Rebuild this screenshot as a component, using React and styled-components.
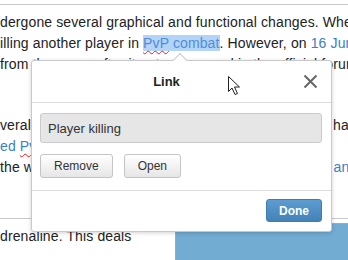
import styled, { createGlobalStyle } from "styled-components";

const GlobalStyle = createGlobalStyle`
  html, body {
    margin: 0;
    padding: 0;
    background: #fff;
  }
  body {
    font-family: "Liberation Sans", Arial, sans-serif;
  }
`;

const Page = styled.div`
  position: relative;
  width: 348px;
  height: 260px;
  overflow: hidden;
  background: #fff;
  color: #222;
  font-size: 14px;
  line-height: 21px;
  letter-spacing: 0.12px;
`;

const TopRule = styled.div`
  margin-top: 4px;
  border-top: 1px solid #c8c8c8;
`;

const Paragraph = styled.div`
  margin-top: ${(p) => p.$gap || 0}px;
`;

const Line = styled.div`
  white-space: nowrap;
`;

const Link = styled.span`
  color: #3b80c6;
  ${(p) =>
    p.$selected &&
    `
    background: #b3d3f7;
    color: #4f8ed6;
  `}
`;

const Misspelled = styled.span`
  text-decoration: underline wavy #e02020;
  text-decoration-thickness: 1px;
  text-underline-offset: 2px;
`;

const SectionRule = styled.div`
  margin-top: 40px;
  border-top: 1px solid #c8c8c8;
`;

const Section = styled.div`
  display: flex;
  gap: 30px;
`;

const SectionText = styled.div`
  flex: 1;
  padding-top: 7px;
  white-space: nowrap;
`;

const Thumb = styled.div`
  width: 172px;
  height: 60px;
  margin-top: 4px;
  border-left: 1px solid #a8a8a8;
  border-top: 1px solid #a8a8a8;
  background: #72acd3;
`;

const Popup = styled.div`
  position: absolute;
  left: 31px;
  top: 60px;
  width: 301px;
  box-sizing: border-box;
  background: #fff;
  border: 1px solid #c9c9c9;
  border-radius: 3px;
  box-shadow: 0 1px 4px rgba(0, 0, 0, 0.18);
  letter-spacing: normal;

  &::before {
    content: "";
    position: absolute;
    top: -6px;
    left: 143px;
    width: 9px;
    height: 9px;
    background: #fff;
    border-left: 1px solid #c9c9c9;
    border-top: 1px solid #c9c9c9;
    transform: rotate(45deg);
  }
`;

const Header = styled.div`
  display: flex;
  align-items: center;
  height: 41px;
  padding-left: 12px;
  border-bottom: 1px solid #dcdcdc;
`;

const Title = styled.div`
  flex: 1;
  text-align: center;
  font-size: 13px;
  font-weight: bold;
  color: #222;
`;

const CloseButton = styled.button`
  width: 42px;
  height: 41px;
  padding: 0;
  border: 0;
  background: none;
  display: flex;
  align-items: center;
  justify-content: center;
  cursor: pointer;
`;

const Body = styled.div`
  padding: 10px 9px 12px 8px;
`;

const Field = styled.div`
  height: 30px;
  box-sizing: border-box;
  display: flex;
  align-items: center;
  padding-left: 7px;
  background: #e6e6e6;
  border: 1px solid #cbcbcb;
  border-radius: 3px;
  font-size: 13px;
  color: #333;
`;

const ButtonRow = styled.div`
  display: flex;
  gap: 11px;
  margin-top: 11px;
`;

const Button = styled.button`
  height: 24px;
  padding: 0 13px;
  font-family: "Liberation Sans", Arial, sans-serif;
  font-size: 12px;
  color: #333;
  background: linear-gradient(#ffffff, #e6e6e6);
  border: 1px solid #c4c4c4;
  border-radius: 3px;
  cursor: pointer;
`;

const Footer = styled.div`
  display: flex;
  justify-content: flex-end;
  padding: 8px 9px 9px;
  border-top: 1px solid #dcdcdc;
`;

const DoneButton = styled.button`
  height: 23px;
  padding: 0 12px;
  font-family: "Liberation Sans", Arial, sans-serif;
  font-size: 12px;
  font-weight: bold;
  color: #fff;
  background: linear-gradient(#5d9cd0, #4282b7);
  border: 1px solid #3f7db0;
  border-radius: 3px;
  cursor: pointer;
`;

const Cursor = styled.svg`
  position: absolute;
  left: 227px;
  top: 75px;
`;

function App() {
  return (
    <Page>
      <GlobalStyle />
      <TopRule />
      <Paragraph $gap={7}>
        <Line>dergone several graphical and functional changes. When it was</Line>
        <Line>
          illing another player in{" "}
          <Link $selected>
            <Misspelled>PvP</Misspelled> combat
          </Link>
          . However, on <Link>16 June 2008</Link>
        </Line>
        <Line>from the game after it got announced in the official forums</Line>
      </Paragraph>
      <Paragraph $gap={40}>
        <Line>veral updates were applied to the Wilderness, which has</Line>
        <Line>
          <Link>
            ed <Misspelled>PvP</Misspelled> worlds
          </Link>{" "}
          were released.
        </Line>
        <Line>
          the wilderness was restored to its original state, with <Link>an update</Link>
        </Line>
      </Paragraph>
      <SectionRule />
      <Section>
        <SectionText>drenaline. This deals</SectionText>
        <Thumb />
      </Section>

      <Popup>
        <Header>
          <Title>Link</Title>
          <CloseButton aria-label="Close">
            <svg width="15" height="15" viewBox="0 0 15 15">
              <path d="M1.5 1.5 L13.5 13.5 M13.5 1.5 L1.5 13.5" stroke="#666" strokeWidth="2" />
            </svg>
          </CloseButton>
        </Header>
        <Body>
          <Field>Player killing</Field>
          <ButtonRow>
            <Button>Remove</Button>
            <Button>Open</Button>
          </ButtonRow>
        </Body>
        <Footer>
          <DoneButton>Done</DoneButton>
        </Footer>
      </Popup>

      <Cursor width="14" height="21" viewBox="0 0 14 21">
        <path
          d="M1.5 1.5 L1.5 16.5 L5 13 L8 19.5 L10.5 18.5 L7.5 12 L12.5 12 Z"
          fill="#fff"
          stroke="#222"
          strokeWidth="1"
          strokeLinejoin="round"
        />
      </Cursor>
    </Page>
  );
}

export default App;
